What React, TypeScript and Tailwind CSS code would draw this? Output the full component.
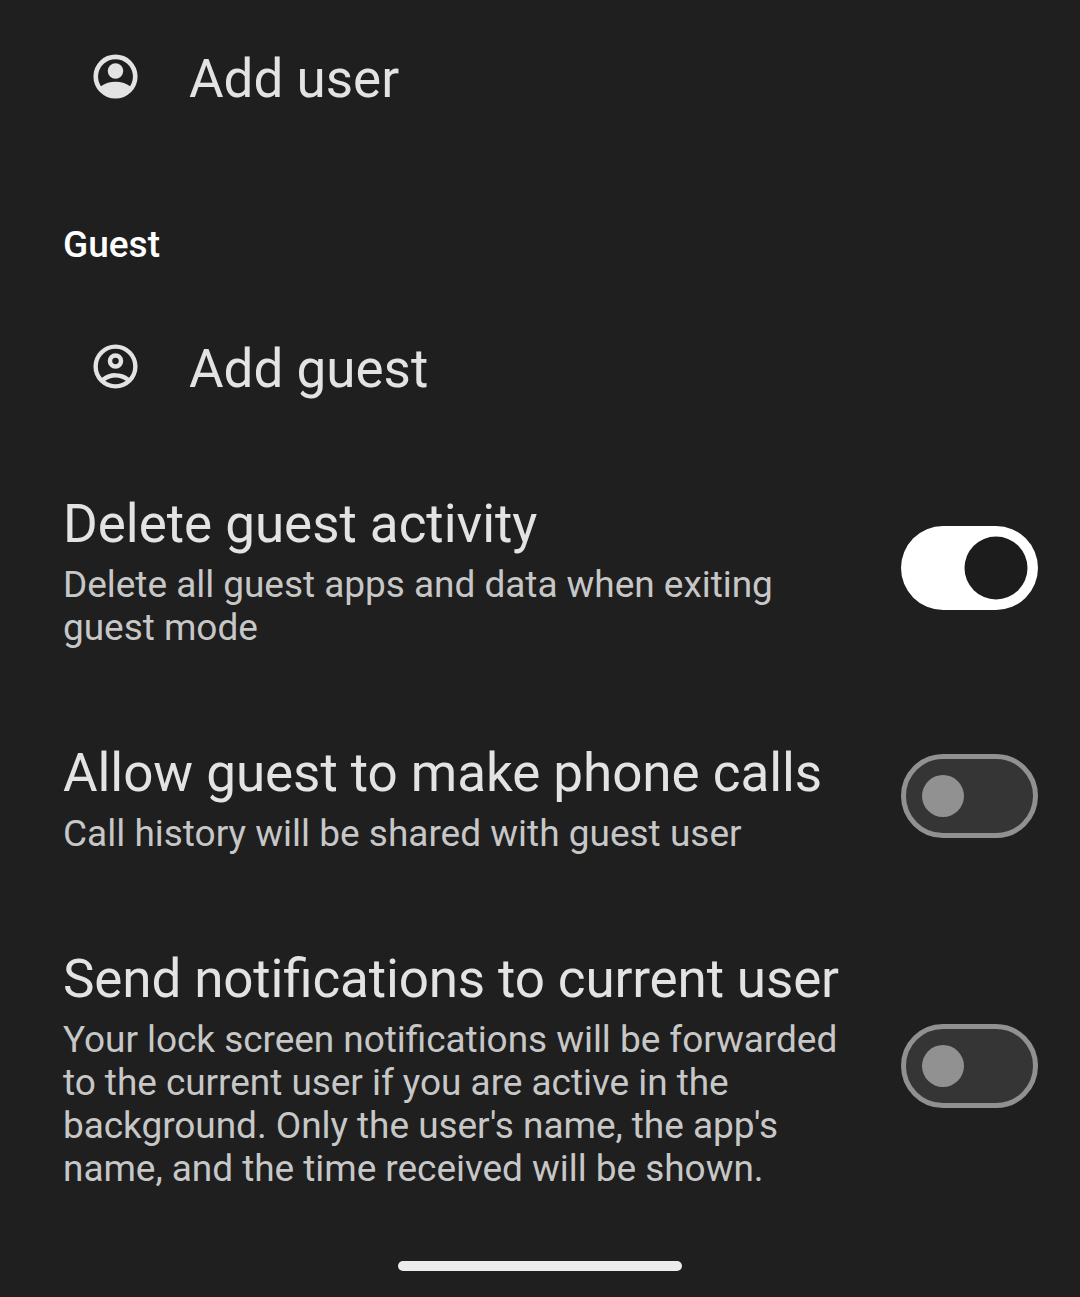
import React from "react";

function Toggle({ on }: { on?: boolean }) {
  return on ? (
    <div role="switch" aria-checked="true" className="mb-[5px] flex h-[84px] w-[137px] shrink-0 items-center justify-end rounded-full bg-white pr-[11px]">
      <div className="h-[63px] w-[63px] translate-x-[0.5px] -translate-y-[0.5px] rounded-full bg-[#1c1c1c]" />
    </div>
  ) : (
    <div role="switch" aria-checked="false" className="mb-[5px] flex h-[84px] w-[137px] shrink-0 items-center rounded-full border-[5px] border-[#919191] bg-[#353535] pl-4">
      <div className="h-[42px] w-[42px] rounded-full bg-[#919191]" />
    </div>
  );
}

type RowProps = { title: string; lines: string[]; on?: boolean; className: string; titleClass?: string; textClass?: string };

function Row({ title, lines, on, className, titleClass = "", textClass = "" }: RowProps) {
  return (
    <div className={`flex items-center justify-between pr-[42px] pl-[63px] [font-feature-settings:'liga'] ${className}`}>
      <div className="whitespace-nowrap">
        <div className={`pt-px text-[53px] leading-[62px] text-[#e3e3e3] ${titleClass}`}>{title}</div>
        <div className={`mt-2 text-[37px] leading-[43px] text-[#c7c7c7] ${textClass}`}>
          {lines.map((l) => (
            <div key={l}>{l}</div>
          ))}
        </div>
      </div>
      <Toggle on={on} />
    </div>
  );
}

export default function App() {
  return (
    <div className="flex h-[1297px] w-[1080px] flex-col overflow-hidden bg-[#1f1f1f] font-[Roboto,sans-serif]">
      <div className="mt-[46px] flex h-[62px] items-center pl-[89px] text-[53px] leading-[62px] text-[#e3e3e3]">
        <svg viewBox="0 0 24 24" className="mr-[47px] mb-[2px] h-[53px] w-[53px]" fill="currentColor">
          <path fillRule="evenodd" d="M12 2a10 10 0 1 0 0 20 10 10 0 0 0 0-20zM5.4 16.400A7.900 7.900 0 1 1 18.600 16.400C16.700 15 14.300 14.400 12 14.400S7.300 15 5.400 16.400z" />
          <circle cx="12" cy="9.500" r="3.500" />
        </svg>
        <span className="mt-1">Add user</span>
      </div>
      <div className="mt-[115px] pl-[63px] text-[37px] leading-[43px] font-medium text-white">Guest</div>
      <div className="mt-[70px] flex h-[62px] items-center pl-[89px] text-[53px] leading-[62px] text-[#e3e3e3]">
        <svg viewBox="0 0 24 24" className="mr-[47px] mb-[2px] h-[53px] w-[53px]" fill="currentColor">
          <path d="M5.85 17.1q1.275-.975 2.850-1.538T12 15t3.300.562 2.850 1.538q.875-1.025 1.363-2.325T20 12q0-3.325-2.337-5.663T12 4 6.337 6.337 4 12q0 1.475.488 2.775T5.850 17.100M12 13q-1.475 0-2.487-1.012T8.500 9.500t1.013-2.487T12 6t2.488 1.013T15.500 9.500t-1.012 2.488T12 13m0 9q-2.075 0-3.900-.788t-3.175-2.137-2.137-3.175T2 12t.788-3.900 2.137-3.175T8.100 2.788 12 2t3.900.788 3.175 2.137T21.213 8.100 22 12t-.788 3.900-2.137 3.175-3.175 2.138T12 22m0-2q1.325 0 2.500-.387t2.150-1.113q-.975-.725-2.150-1.112T12 17t-2.500.388T7.350 18.500q.975.725 2.150 1.113T12 20m0-9q.65 0 1.075-.425T13.500 9.500t-.425-1.075T12 8t-1.075.425T10.500 9.500t.425 1.075T12 11" />
        </svg>
        <span className="mt-1">Add guest</span>
      </div>
      <Row className="mt-[94px]" title="Delete guest activity" titleClass="tracking-[-0.04px]" lines={["Delete all guest apps and data when exiting", "guest mode"]} textClass="tracking-[-0.04px]" on />
      <Row className="mt-[92px]" title="Allow guest to make phone calls" titleClass="tracking-[-0.06px]" lines={["Call history will be shared with guest user"]} />
      <Row
        className="mt-[92px]"
        title="Send notifications to current user"
        titleClass="tracking-[-0.15px]"
        textClass="tracking-[-0.05px]"
        lines={["Your lock screen notifications will be forwarded", "to the current user if you are active in the", "background. Only the user's name, the app's", "name, and the time received will be shown."]}
      />
      <div className="mt-[71px] h-[10px] w-[284px] shrink-0 self-center rounded-full bg-[#ececec]" />
    </div>
  );
}
